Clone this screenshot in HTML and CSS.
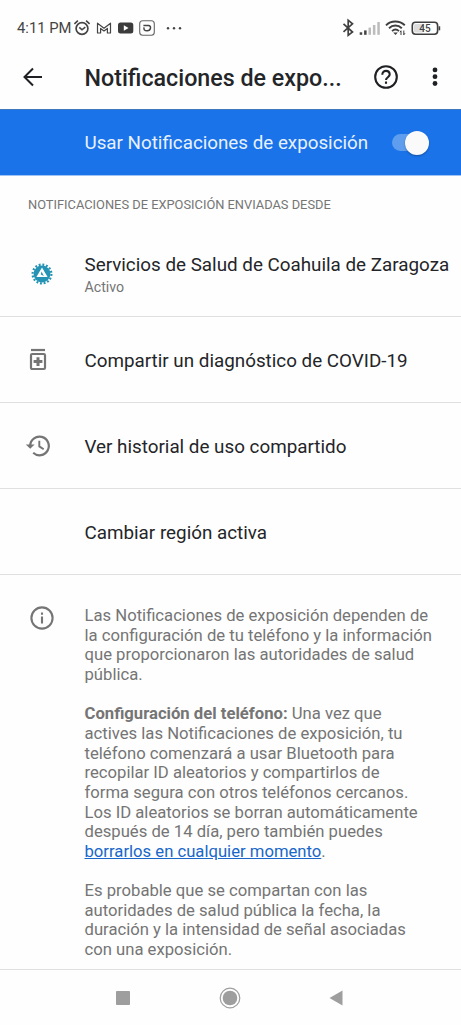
FILE: index.html
```html
<!DOCTYPE html>
<html lang="es">
<head>
<meta charset="utf-8">
<title>Notificaciones de exposición</title>
<link rel="stylesheet" href="styles.css">
</head>
<body>
<div class="screen">
  <div class="status">
    <span class="clock">4:11 PM</span>
    <svg class="status-left" width="112" height="20" viewBox="0 0 112 20" fill="none" stroke="#444">
      <circle cx="9" cy="10.5" r="5.9" stroke-width="1.7"/>
      <path d="M1.4 5.8 4.9 2.7M16.6 5.8 13.1 2.7M6.3 9.3 9 11.8 12.3 9.2" stroke-width="1.6"/>
      <path d="M24.5 15V5.2L31 10.2 37.5 5.2V15H34.4V10.4L31 13 27.6 10.4V15Z" stroke-width="1.2" stroke-linejoin="round"/>
      <rect x="45" y="4.5" width="15.3" height="11" rx="2.5" fill="#3c3c3c" stroke="none"/>
      <path d="M50.8 7.2 55.5 10 50.8 12.8Z" fill="#fff" stroke="none"/>
      <rect x="66.7" y="2.7" width="14.6" height="14.6" rx="3" stroke="#666" stroke-width="1.1"/>
      <path d="M70.4 7.5H75.5C78.7 7.7 78 12.8 74.2 12.8 71 12.8 70.8 11.3 71 9.4" stroke-width="1.5"/>
      <g fill="#444" stroke="none"><circle cx="95" cy="10.2" r="1.2"/><circle cx="101" cy="10.2" r="1.2"/><circle cx="107" cy="10.2" r="1.2"/></g>
    </svg>
    <svg class="status-right" width="100" height="20" viewBox="0 0 100 20" fill="none" stroke="#3f3f3f">
      <path d="M2.5 5.8 11.5 14 7.2 17.3V2.2L11.5 5.8 2.5 13.8" stroke-width="1.7"/>
      <g stroke="none"><rect x="18.7" y="14.3" width="2.5" height="2.5" fill="#444"/><rect x="23.1" y="12.4" width="2.5" height="4.4" fill="#444"/><rect x="27.5" y="9.6" width="2.5" height="7.2" fill="#bcbcbc"/><rect x="31.9" y="7" width="2.5" height="9.8" fill="#bcbcbc"/><rect x="36.3" y="4" width="2.5" height="12.8" fill="#bcbcbc"/></g>
      <path d="M45 7.3C50 2.3 58.5 2.3 63.8 7.3M48 10.2C51.7 6.6 57 6.6 60.8 10.2M51 13.1C53.3 11 55.7 11 58 13.1" stroke-width="1.9"/>
      <path d="M52.2 14.6 54.5 17 56.8 14.6Z" fill="#3f3f3f" stroke="none"/>
      <path d="M60 17V12.7M59 14.2 60 12.9M62.8 12.5V17M64 15.2 62.8 16.7" stroke-width="1"/>
      <rect x="71.3" y="4.3" width="25.3" height="11.9" rx="3.2" stroke-width="1.6"/>
      <rect x="73" y="6" width="9.5" height="8.5" rx="1.5" fill="#ddd" stroke="none"/>
      <path d="M98.4 8.3V12.3" stroke-width="1.6"/>
      <text x="83.9" y="13.9" class="battery">45</text>
    </svg>
  </div>
  <header class="appbar">
    <svg class="back" width="22" height="20" viewBox="0 0 22 20" fill="none" stroke="#202124" stroke-width="2"><path d="M20 10H3M11 1.5 2.5 10 11 18.5"/></svg>
    <h1>Notificaciones de expo...</h1>
    <svg class="help" width="26" height="26" viewBox="0 0 26 26" fill="none" stroke="#202124" stroke-width="2.1"><circle cx="13" cy="13" r="10.8"/><path d="M9.3 10.8C9.3 5.5 16.7 5.7 16.7 10.6 16.7 13.2 13 13.3 13 16"/><path d="M13 17.5V19.8"/></svg>
    <svg class="more" width="6" height="22" viewBox="0 0 6 22" fill="#202124"><circle cx="3" cy="3.9" r="2.4"/><circle cx="3" cy="10.7" r="2.4"/><circle cx="3" cy="17.5" r="2.4"/></svg>
  </header>
  <div class="master">
    <span>Usar Notificaciones de exposición</span>
    <span class="switch"><span class="thumb"></span></span>
  </div>
  <div class="section">NOTIFICACIONES DE EXPOSICIÓN ENVIADAS DESDE</div>
  <div class="row first">
    <div class="icon">
      <svg width="24" height="24" viewBox="0 0 24 24" fill="none"><circle cx="12" cy="12" r="9.4" stroke="#2493b4" stroke-width="2.2" stroke-dasharray="1.9 1.8"/><circle cx="12" cy="12" r="8.4" fill="#2493b4"/><path d="M12 5.5 17.6 15H6.4Z" fill="#fff"/><path d="M11.6 9.5 13.8 14 10.8 12.4Z" fill="#2493b4"/></svg>
    </div>
    <div class="label"><span>Servicios de Salud de Coahuila de Zaragoza</span><small>Activo</small></div>
  </div>
  <div class="row">
    <div class="icon shifted"><svg width="18" height="23" viewBox="0 0 18 23" fill="none" stroke="#757575"><path d="M2 2H16" stroke-width="2.2"/><rect x="2" y="6" width="14" height="15" rx="1.2" stroke-width="2.2"/><path d="M9 9.2V18M4.6 13.6H13.4" stroke-width="3"/></svg></div>
    <div class="label">Compartir un diagnóstico de COVID-19</div>
  </div>
  <div class="row">
    <div class="icon shifted"><svg width="26" height="22" viewBox="0 0 26 22" fill="none" stroke="#757575" stroke-width="2.2"><path d="M5.2 12V11A9.3 9.3 0 1 1 8.2 17.8"/><path d="M.8 9.5H9.6L5.2 13.7Z" fill="#757575" stroke="none"/><path d="M14.3 5.8V11.4L18.7 14.2" stroke-width="1.9"/></svg></div>
    <div class="label">Ver historial de uso compartido</div>
  </div>
  <div class="row">
    <div class="icon"></div>
    <div class="label">Cambiar región activa</div>
  </div>
  <div class="info">
    <div class="icon"><svg width="24" height="24" viewBox="0 0 24 24" fill="none" stroke="#757575" stroke-width="2.1"><circle cx="12" cy="12" r="10.6"/><path d="M12 10.5V17.6M12 6.5V8.8"/></svg></div>
    <div class="copy">
      <p>Las Notificaciones de exposición dependen de<br>la configuración de tu teléfono y la información<br>que proporcionaron las autoridades de salud<br>pública.</p>
      <p><b>Configuración del teléfono:</b> Una vez que<br>actives las Notificaciones de exposición, tu<br>teléfono comenzará a usar Bluetooth para<br>recopilar ID aleatorios y compartirlos de<br>forma segura con otros teléfonos cercanos.<br>Los ID aleatorios se borran automáticamente<br>después de 14 día, pero también puedes<br><a>borrarlos en cualquier momento</a>.</p>
      <p>Es probable que se compartan con las<br>autoridades de salud pública la fecha, la<br>duración y la intensidad de señal asociadas<br>con una exposición.</p>
    </div>
  </div>
  <nav class="nav">
    <svg width="14" height="14" viewBox="0 0 14 14"><rect width="14" height="14" rx=".8" fill="#9e9e9e"/></svg>
    <svg width="22" height="22" viewBox="0 0 22 22"><circle cx="11" cy="11" r="9.8" fill="none" stroke="#9e9e9e" stroke-width="1.2"/><circle cx="11" cy="11" r="7.3" fill="#9e9e9e"/></svg>
    <svg width="14" height="16" viewBox="0 0 14 16"><path d="M13.5.5V15.5L.5 8Z" fill="#9e9e9e"/></svg>
  </nav>
</div>
</body>
</html>
```
FILE: styles.css
```css
* { box-sizing: border-box; }
body { margin: 0; background: #fff; font-family: Roboto, sans-serif; color: #242528; }
svg { display: block; flex: none; }
.screen { width: 461px; height: 1025px; display: flex; flex-direction: column; overflow: hidden; background: #fefefe; }
.status { height: 44px; flex: none; display: flex; align-items: center; padding: 11px 20px 0 17px; color: #444; }
.clock { width: 56px; flex: none; font-size: 14.8px; white-space: nowrap; }
.status-right { margin-left: auto; }
.battery { font: 500 10px Roboto, sans-serif; fill: #444; stroke: none; text-anchor: middle; }
.appbar { height: 65px; flex: none; display: flex; align-items: center; padding: 0 23px 0 22px; }
h1 { margin: 2px 0 0 40.5px; width: 288px; font-size: 23.25px; font-weight: 500; white-space: nowrap; }
.help { margin-right: 33px; }
.master { height: 67px; flex: none; display: flex; align-items: center; justify-content: space-between; padding: 0 32px 0 84.5px; background: #1a73e8; border-top: 1px solid #3f79bd; border-bottom: 1px solid #9fc3f5; color: #e8f1ff; font-size: 18.8px; }
.master > :first-child { padding-top: 1px; }
.switch { width: 37px; height: 17px; border-radius: 9px; background: #5f9eef; display: flex; align-items: center; justify-content: flex-end; }
.thumb { width: 24px; height: 24px; flex: none; border-radius: 50%; background: #fafafa; box-shadow: 0 1px 2px rgba(0,0,0,.3); }
.section { height: 56px; flex: none; padding-left: 28px; line-height: 57px; font-size: 12.85px; color: #757575; white-space: nowrap; }
.row { height: 86px; flex: none; display: flex; align-items: center; border-bottom: 1.5px solid #e0e0e0; font-size: 18.82px; white-space: nowrap; }
.row.first { height: 85px; }
.icon { width: 84.5px; flex: none; display: flex; justify-content: center; }
.icon.shifted { padding-right: 9px; }
.label { display: flex; flex-direction: column; padding-top: 3px; }
.first .label { padding-top: 2px; }
.label small { margin-top: 2px; font-size: 14.2px; line-height: 18px; color: #757575; }
.info { flex: 1; min-height: 0; display: flex; padding-top: 31px; color: #757575; }
.info .icon { align-self: flex-start; }
.copy { font-size: 16.67px; line-height: 19.65px; white-space: nowrap; }
.copy p { margin: 0 0 19.65px; }
.copy p:last-child { margin-bottom: 0; }
.copy a { color: #1967c9; text-decoration: underline; }
.nav { height: 56px; flex: none; display: flex; align-items: center; justify-content: space-between; border-top: 1.5px solid #e0e0e0; padding: 0 118px 0 116px; }
```
